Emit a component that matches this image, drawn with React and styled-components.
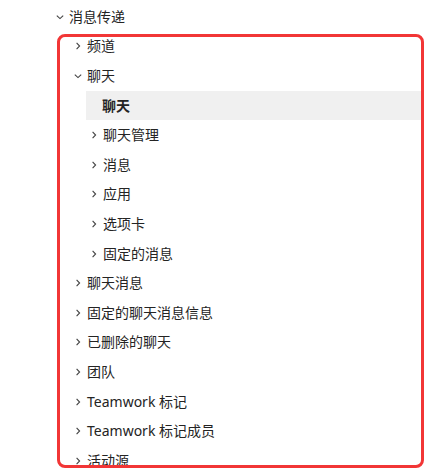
import styled, { createGlobalStyle } from 'styled-components'

const GlobalStyle = createGlobalStyle`
  body {
    margin: 0;
    background: #ffffff;
    font-family: "Noto Sans", "Noto Sans CJK SC", sans-serif;
  }
`

const items = [
  { label: '消息传递', level: 0, open: true },
  { label: '频道', level: 1 },
  { label: '聊天', level: 1, open: true },
  { label: '聊天', level: 2, leaf: true, selected: true },
  { label: '聊天管理', level: 2 },
  { label: '消息', level: 2 },
  { label: '应用', level: 2 },
  { label: '选项卡', level: 2 },
  { label: '固定的消息', level: 2 },
  { label: '聊天消息', level: 1 },
  { label: '固定的聊天消息信息', level: 1 },
  { label: '已删除的聊天', level: 1 },
  { label: '团队', level: 1 },
  { label: 'Teamwork 标记', level: 1 },
  { label: 'Teamwork 标记成员', level: 1 },
  { label: '活动源', level: 1 },
]

const indent = [56, 74, 90]

const Chevron = ({ open }) => (
  <ChevronBox>
    <svg width="8" height="8" viewBox="0 0 8 8" fill="none">
      {open ? (
        <path d="M0.8 2.6 L4 5.6 L7.2 2.6" stroke="#424242" strokeWidth="1.1" />
      ) : (
        <path d="M2.6 0.8 L5.6 4 L2.6 7.2" stroke="#424242" strokeWidth="1.1" />
      )}
    </svg>
  </ChevronBox>
)

const App = () => {
  return (
    <Page>
      <GlobalStyle />
      <Tree>
        {items.map((item, i) => (
          <Row key={i} selected={item.selected}>
            <RowInner level={item.level} leaf={item.leaf}>
              {!item.leaf && <Chevron open={item.open} />}
              <Label selected={item.selected}>{item.label}</Label>
            </RowInner>
          </Row>
        ))}
      </Tree>
      <Highlight />
    </Page>
  )
}

const Page = styled.div`
  position: relative;
  width: 439px;
  height: 476px;
  overflow: hidden;
  background: #ffffff;
`

const Tree = styled.ul`
  list-style: none;
  margin: 0;
  padding: 2px 0 0 0;
`

const Row = styled.li`
  height: 29.6px;
  display: flex;
  align-items: center;
  background: ${({ selected }) => (selected ? '#f0f0f0' : 'transparent')};
  margin-left: ${({ selected }) => (selected ? '86px' : '0')};
  margin-right: ${({ selected }) => (selected ? '17px' : '0')};
`

const RowInner = styled.div`
  display: flex;
  align-items: center;
  padding-left: ${({ level, leaf }) => (leaf ? '16px' : `${indent[level]}px`)};
`

const ChevronBox = styled.span`
  width: 8px;
  height: 8px;
  display: flex;
  margin-right: 5px;
`

const Label = styled.span`
  font-size: 14px;
  line-height: 20px;
  color: #242424;
  font-weight: ${({ selected }) => (selected ? 700 : 400)};
  white-space: nowrap;
`

const Highlight = styled.div`
  position: absolute;
  left: 57px;
  top: 34px;
  width: 367px;
  height: 434px;
  box-sizing: border-box;
  border: 3px solid #f23636;
  border-radius: 8px;
  pointer-events: none;
`

export default App
